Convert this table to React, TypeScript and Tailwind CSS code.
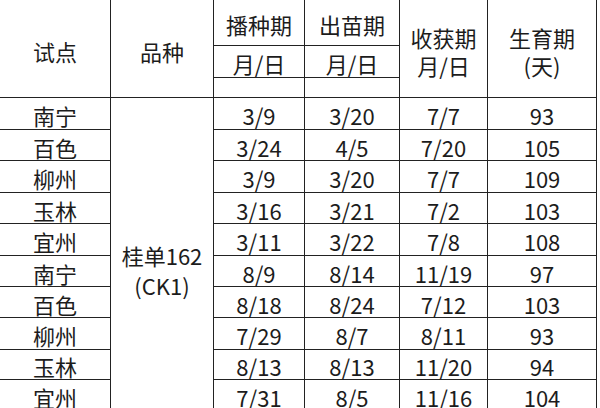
import React from "react";

const rows: [string, string, string, string, string][] = [
  ["南宁", "3/9", "3/20", "7/7", "93"],
  ["百色", "3/24", "4/5", "7/20", "105"],
  ["柳州", "3/9", "3/20", "7/7", "109"],
  ["玉林", "3/16", "3/21", "7/2", "103"],
  ["宜州", "3/11", "3/22", "7/8", "108"],
  ["南宁", "8/9", "8/14", "11/19", "97"],
  ["百色", "8/18", "8/24", "7/12", "103"],
  ["柳州", "7/29", "8/7", "8/11", "93"],
  ["玉林", "8/13", "8/13", "11/20", "94"],
  ["宜州", "7/31", "8/5", "11/16", "104"],
  ["", "", "", "", ""],
];

const heights = ["h-[32px]", "h-[31px]", "h-[32px]", "h-[31px]", "h-[32px]", "h-[31px]", "h-[31px]", "h-[32px]", "h-[30px]", "h-[31px]", "h-[31px]"];

const cell = "border-[1.5px] border-[#222] text-center align-middle p-0";

export default function App() {
  return (
    <div className="w-[600px] h-[408px] overflow-hidden bg-white text-[#1c1c1c] font-['Noto_Sans_CJK_SC','Noto_Sans',sans-serif] text-[22px] leading-[28px]">
      <table className="table-fixed border-collapse w-[597px] -mt-[1px] -ml-[1px]">
        <colgroup>
          <col className="w-[111px]" />
          <col className="w-[103px]" />
          <col className="w-[91px]" />
          <col className="w-[95px]" />
          <col className="w-[88px]" />
          <col className="w-[109px]" />
        </colgroup>
        <tbody>
          <tr className="h-[46px]">
            <td rowSpan={3} className={cell + " pt-[4px]"}>试点</td>
            <td rowSpan={3} className={cell + " pt-[4px]"}>品种</td>
            <td className={cell + " pt-[3px]"}>播种期</td>
            <td className={cell + " pt-[3px]"}>出苗期</td>
            <td rowSpan={3} className={cell + " pt-[4px]"}>
              <div>收获期</div>
              <div>月/日</div>
            </td>
            <td rowSpan={3} className={cell + " pt-[4px]"}>
              <div>生育期</div>
              <div>(天)</div>
            </td>
          </tr>
          <tr className="h-[32px]">
            <td className={cell + " pt-[3px]"}>月/日</td>
            <td className={cell + " pt-[3px]"}>月/日</td>
          </tr>
          <tr className="h-[20px]">
            <td className={cell}></td>
            <td className={cell}></td>
          </tr>
          {rows.map((r, i) => (
            <tr key={i} className={heights[i]}>
              <td className={cell + " pt-[3px] leading-[24px]"}>{r[0]}</td>
              {i === 0 && (
                <td rowSpan={rows.length} className={cell + " leading-[30px]"}>
                  <div>桂单162</div>
                  <div>(CK1)</div>
                </td>
              )}
              <td className={cell + " pt-[3px] leading-[24px]"}>{r[1]}</td>
              <td className={cell + " pt-[3px] leading-[24px]"}>{r[2]}</td>
              <td className={cell + " pt-[3px] leading-[24px]"}>{r[3]}</td>
              <td className={cell + " pt-[3px] leading-[24px]"}>{r[4]}</td>
            </tr>
          ))}
        </tbody>
      </table>
    </div>
  );
}
